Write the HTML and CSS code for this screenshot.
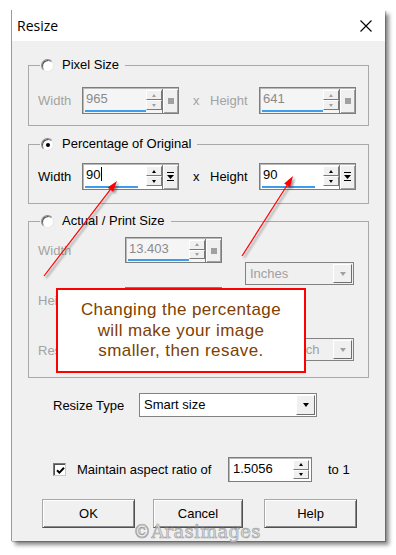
FILE: index.html
```html
<!DOCTYPE html>
<html>
<head>
<meta charset="utf-8">
<title>Resize</title>
<link rel="stylesheet" href="styles.css">
</head>
<body>
<div class="dialog">
  <div class="titlebar">
    <span class="title">Resize</span>
    <svg class="close" width="12" height="12" viewBox="0 0 12 12"><path d="M0.5 0.5L11.5 11.5M11.5 0.5L0.5 11.5" stroke="#000" stroke-width="1.1" fill="none"/></svg>
  </div>
  <div class="content">
    <fieldset class="grp g1">
      <legend><span class="lg"><span class="radio"></span>Pixel Size</span></legend>
      <div class="row">
        <span class="lbl dim">Width</span>
        <div class="spin dis">
          <div class="field"><span class="val">965</span><i class="ul"></i></div>
          <div class="arr"><b class="up"></b><b class="dn"></b></div>
          <div class="sq"><i class="dot"></i></div>
        </div>
        <span class="x dim">x</span>
        <span class="hlbl dim">Height</span>
        <div class="spin dis">
          <div class="field"><span class="val">641</span><i class="ul"></i></div>
          <div class="arr"><b class="up"></b><b class="dn"></b></div>
          <div class="sq"><i class="dot"></i></div>
        </div>
      </div>
    </fieldset>

    <fieldset class="grp g2">
      <legend><span class="lg"><span class="radio on"></span>Percentage of Original</span></legend>
      <div class="row">
        <span class="lbl">Width</span>
        <div class="spin">
          <div class="field"><span class="val">90<i class="caret"></i></span><i class="ul part"></i></div>
          <div class="arr"><b class="up"></b><b class="dn"></b></div>
          <div class="sq"><svg width="7" height="10" viewBox="0 0 7 10"><rect x="0" y="0" width="7" height="1"/><path d="M0 3H7L3.5 7Z"/><rect x="0" y="8" width="7" height="1"/></svg></div>
        </div>
        <span class="x">x</span>
        <span class="hlbl">Height</span>
        <div class="spin">
          <div class="field"><span class="val">90</span><i class="ul part"></i></div>
          <div class="arr"><b class="up"></b><b class="dn"></b></div>
          <div class="sq"><svg width="7" height="10" viewBox="0 0 7 10"><rect x="0" y="0" width="7" height="1"/><path d="M0 3H7L3.5 7Z"/><rect x="0" y="8" width="7" height="1"/></svg></div>
        </div>
      </div>
    </fieldset>

    <fieldset class="grp g3">
      <legend><span class="lg"><span class="radio"></span>Actual / Print Size</span></legend>
      <div class="g3body">
        <div class="g3l">
          <span class="lbl dim">Width</span>
          <div class="spin dis h26">
            <div class="field"><span class="val">13.403</span><i class="ul"></i></div>
            <div class="arr"><b class="up"></b><b class="dn"></b></div>
            <div class="sq"><i class="dot"></i></div>
          </div>
          <span class="lbl dim">Height</span>
          <div class="spin dis h26">
            <div class="field"><span class="val"></span><i class="ul"></i></div>
            <div class="arr"><b class="up"></b><b class="dn"></b></div>
            <div class="sq"><i class="dot"></i></div>
          </div>
          <span class="lbl dim">Resolution</span>
          <div class="spin dis h26">
            <div class="field"><span class="val"></span><i class="ul"></i></div>
            <div class="arr"><b class="up"></b><b class="dn"></b></div>
            <div class="sq"><i class="dot"></i></div>
          </div>
        </div>
        <div class="g3r">
          <div class="combo dis c1"><span class="ctext">Inches</span><span class="cbtn"><i class="tri"></i></span></div>
          <div class="combo dis c2"><span class="ctext">Pixels / inch</span><span class="cbtn"><i class="tri"></i></span></div>
        </div>
      </div>
    </fieldset>

    <div class="rtype">
      <span class="rlbl">Resize Type</span>
      <div class="combo wide"><span class="ctext">Smart size</span><span class="cbtn"><i class="tri"></i></span></div>
    </div>

    <div class="mrow">
      <span class="chk"><svg width="9" height="9" viewBox="0 0 9 9"><path d="M1 4.2L3.4 6.6L8 1.8" stroke="#000" stroke-width="2" fill="none"/></svg></span>
      <span class="mtext">Maintain aspect ratio of</span>
      <div class="spin ratio">
        <div class="field"><span class="val">1.5056</span></div>
        <div class="arr"><b class="up"></b><b class="dn"></b></div>
      </div>
      <span class="to">to 1</span>
    </div>

    <div class="btns">
      <button class="btn ok">OK</button>
      <button class="btn cancel">Cancel</button>
      <button class="btn help">Help</button>
    </div>
  </div>
</div>

<div class="callout">
  <span>Changing the percentage</span>
  <span>will make your image</span>
  <span>smaller, then resave.</span>
</div>

<svg class="arrows" width="396" height="555" viewBox="0 0 396 555">
  <defs>
    <filter id="sh" x="-30%" y="-30%" width="160%" height="160%"><feGaussianBlur stdDeviation="1.1"/></filter>
  </defs>
  <g transform="translate(2,2)" filter="url(#sh)" opacity="0.55" stroke="#444" fill="#444" stroke-width="1.3">
    <line x1="44" y1="276" x2="110.3" y2="189.7"/>
    <polygon points="117,181 113.1,191.8 107.5,187.6" stroke="none"/>
    <line x1="242" y1="256" x2="287.1" y2="185.3"/>
    <polygon points="293,176 290.05,187.2 284.15,183.4" stroke="none"/>
  </g>
  <g stroke="#f00" fill="#f00" stroke-width="1.2">
    <line x1="44" y1="276" x2="110.3" y2="189.7"/>
    <polygon points="117,181 113.1,191.8 107.5,187.6" stroke="none"/>
    <line x1="242" y1="256" x2="287.1" y2="185.3"/>
    <polygon points="293,176 290.05,187.2 284.15,183.4" stroke="none"/>
  </g>
</svg>

<div class="watermark">©Arasimages</div>
</body>
</html>
```

FILE: styles.css
```css
html, body {
  margin: 0;
  padding: 0;
}
body {
  background: #fff;
  font-family: "Liberation Sans", Arial, sans-serif;
  font-size: 13px;
  color: #000;
  width: 396px;
  height: 555px;
  overflow: hidden;
  position: relative;
}

.dialog {
  margin: 10px 0 0 11px;
  width: 374px;
  box-sizing: border-box;
  border-left: 1px solid #6aa4e6;
  box-shadow: 4px 4px 4px rgba(0, 0, 0, 0.45), 1px 1px 1px rgba(0, 0, 0, 0.25);
}

.titlebar {
  height: 31px;
  background: #fff;
  display: flex;
  align-items: center;
  justify-content: space-between;
  padding: 0 13px 0 5px;
}
.title {
  font-family: "Open Sans", "Noto Sans", sans-serif;
  font-size: 14px;
}
.close { display: block; }

.content {
  background: #f0f0f0;
  padding: 17px 0 13px;
}

/* group boxes */
.grp {
  margin: 0 16px;
  border: 1px solid #a9a9a9;
  padding: 15px 9px 11px;
  min-width: 0;
}
.g2 { margin-top: 11px; padding-top: 12px; padding-bottom: 13px; }
.g3 { margin-top: 10px; padding-top: 9px; padding-bottom: 14px; }

legend {
  padding: 0 6px 0 1px;
  margin-left: 2px;
  height: 14px;
  line-height: 14px;
}
.lg {
  display: flex;
  align-items: center;
  height: 14px;
  white-space: nowrap;
}

.radio {
  width: 13px;
  height: 13px;
  box-sizing: border-box;
  border-radius: 50%;
  background: #fff;
  border: 1px solid;
  border-color: #8a8a8a #e8e8e8 #e8e8e8 #8a8a8a;
  box-shadow: inset 1px 1px 0 #555;
  margin-right: 8px;
  display: flex;
  align-items: center;
  justify-content: center;
}
.radio.on::after {
  content: "";
  width: 4px;
  height: 4px;
  border-radius: 50%;
  background: #000;
  margin: 1px 0 0 1px;
}

.dim { color: #a3a3a3; }

.row {
  display: flex;
  align-items: center;
  height: 27px;
}
.lbl { width: 44px; flex: none; }
.x { width: 17px; margin-left: 14px; flex: none; }
.hlbl { width: 49px; flex: none; }

/* spin boxes */
.spin {
  display: flex;
  width: 97px;
  height: 27px;
  flex: none;
  box-sizing: border-box;
  border: 1px solid #7d7d7d;
  padding: 1px 0 0 1px;
  background: #b9b9b9;
}
.spin.h26 { height: 26px; }
.field {
  flex: 1;
  display: flex;
  flex-direction: column;
  background: #fff;
  min-width: 0;
}
.spin.dis .field { background: #f5f5f5; }
.val {
  flex: 1;
  padding-left: 2px;
  line-height: 20px;
  white-space: nowrap;
}
.spin.dis .val { color: #8a8a8a; }
.caret {
  display: inline-block;
  width: 1px;
  height: 14px;
  background: #000;
  vertical-align: -2px;
  margin-left: 1px;
}
.ul {
  height: 2px;
  background: #3d9cec;
  margin: 0 0 1px 1px;
}
.ul.part { width: 53px; }

.arr {
  width: 16px;
  flex: none;
  display: flex;
  flex-direction: column;
  padding: 1px 0 3px;
  background: #fff;
}
.spin.dis .arr { background: #f5f5f5; }
.arr b {
  flex: 1;
  background: #f0f0f0;
  border: 1px solid;
  border-color: #fff #7a7a7a #7a7a7a #fff;
  display: flex;
  align-items: center;
  justify-content: center;
}
.arr b::after {
  content: "";
  border-left: 2.5px solid transparent;
  border-right: 2.5px solid transparent;
}
.arr .up::after { border-bottom: 3px solid #000; }
.arr .dn::after { border-top: 3px solid #000; }
.spin.dis .arr .up::after { border-bottom-color: #a0a0a0; }
.spin.dis .arr .dn::after { border-top-color: #a0a0a0; }

.sq {
  width: 15px;
  flex: none;
  background: #f0f0f0;
  border-left: 1px solid #7a7a7a;
  box-shadow: inset 1px 1px 0 #fff, inset -1px -1px 0 #a0a0a0;
  display: flex;
  align-items: center;
  justify-content: center;
}
.sq svg { display: block; fill: #000; }
.dot {
  width: 6px;
  height: 6px;
  background: #a0a0a0;
}

/* group 3 */
.g3body { display: flex; }
.g3l {
  display: grid;
  grid-template-columns: 87px 97px;
  grid-template-rows: 26px 26px 26px;
  row-gap: 24px;
  align-items: center;
}
.g3r {
  margin-left: 23px;
  display: flex;
  flex-direction: column;
  width: 109px;
}
.c1 { margin-top: 25px; }
.c2 { margin-top: 53px; }

/* combo boxes */
.combo {
  display: flex;
  box-sizing: border-box;
  height: 23px;
  border: 1px solid #828282;
  background: #fff;
}
.combo.dis { background: #f0f0f0; }
.ctext {
  flex: 1;
  padding-left: 4px;
  line-height: 21px;
  white-space: nowrap;
  overflow: hidden;
}
.combo.dis .ctext { color: #a0a0a0; }
.cbtn {
  width: 19px;
  flex: none;
  margin: 1px;
  background: #f0f0f0;
  border: 1px solid;
  border-color: #fff #6e6e6e #6e6e6e #fff;
  box-sizing: border-box;
  display: flex;
  align-items: center;
  justify-content: center;
}
.tri {
  width: 0;
  height: 0;
  border-left: 3.5px solid transparent;
  border-right: 3.5px solid transparent;
  border-top: 4px solid #000;
}
.combo.dis .tri { border-top-color: #a0a0a0; }

.rtype {
  display: flex;
  align-items: center;
  margin: 15px 0 0 41px;
}
.rlbl { width: 86px; flex: none; }
.combo.wide { width: 178px; height: 24px; }
.combo.wide .ctext { line-height: 22px; }

.mrow {
  display: flex;
  align-items: center;
  height: 25px;
  margin: 40px 0 0 41px;
}
.chk {
  width: 13px;
  height: 13px;
  box-sizing: border-box;
  background: #fff;
  border: 1px solid;
  border-color: #7a7a7a #c8c8c8 #c8c8c8 #7a7a7a;
  box-shadow: inset 1px 1px 0 #505050;
  display: flex;
  align-items: center;
  justify-content: center;
  margin-right: 11px;
  flex: none;
}
.chk svg { display: block; margin: 1px 0 0 1px; }
.mtext { width: 151px; flex: none; white-space: nowrap; }
.spin.ratio { width: 84px; height: 25px; }
.spin.ratio .arr { padding: 1px 2px 2px 0; }
.spin.ratio .val { line-height: 20px; padding-left: 3px; }
.to { margin-left: 16px; }

.btns {
  display: flex;
  margin: 17px 0 0 30px;
}
.btn {
  height: 29px;
  padding: 0;
  font-family: "Liberation Sans", Arial, sans-serif;
  font-size: 13px;
  color: #000;
  background: #f0f0f0;
  border: 1px solid;
  border-color: #a8a8a8 #505050 #505050 #a8a8a8;
  box-shadow: inset 1px 1px 0 #fff, inset -1px -1px 0 #8a8a8a;
}
.ok { width: 93px; }
.cancel { width: 90px; margin-left: 18px; }
.help { width: 93px; margin-left: 21px; }

/* overlays */
.callout {
  position: absolute;
  left: 56px;
  top: 288px;
  width: 250px;
  height: 85px;
  box-sizing: border-box;
  border: 2px solid #f00;
  background: #fff;
  color: #804000;
  font-size: 17px;
  letter-spacing: 0.4px;
  line-height: 20.5px;
  text-align: center;
  display: flex;
  flex-direction: column;
  justify-content: center;
  padding-top: 1px;
}

.arrows {
  position: absolute;
  left: 0;
  top: 0;
  pointer-events: none;
}

.watermark {
  position: absolute;
  left: 133px;
  top: 521px;
  font-family: "DejaVu Serif", serif;
  font-size: 18px;
  color: #dcdcdc;
  -webkit-text-stroke: 0.6px #9c9c9c;
  letter-spacing: 0.3px;
  pointer-events: none;
}
```
